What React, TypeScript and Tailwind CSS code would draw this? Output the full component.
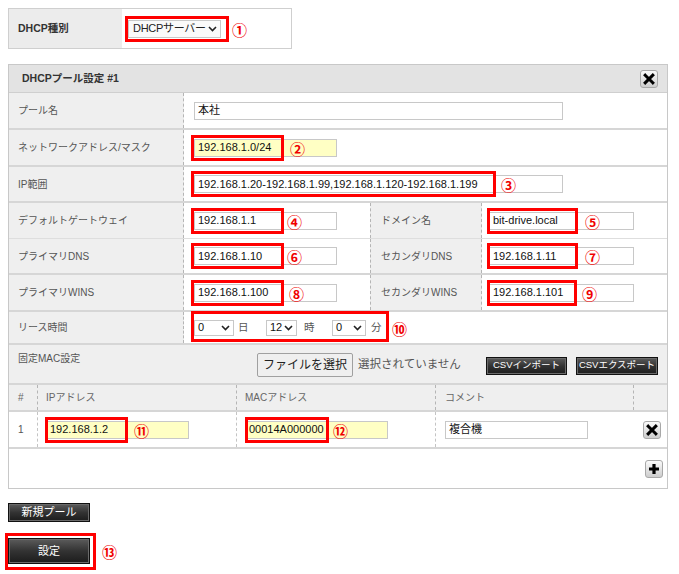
import React from "react";

const XBtn = () => (
  <div className="w-[18px] h-[18px] rounded-[3px] border border-[#a8a8a8] bg-gradient-to-b from-[#fbfbfb] to-[#cdcdcd] flex items-center justify-center">
    <svg width="12" height="12" viewBox="0 0 12 12">
      <path d="M2.2 2.2 L9.8 9.8 M9.8 2.2 L2.2 9.8" stroke="#000" strokeWidth="3" strokeLinecap="square" />
    </svg>
  </div>
);

const PlusBtn = () => (
  <div className="w-[18px] h-[18px] rounded-[3px] border border-[#a8a8a8] bg-gradient-to-b from-[#fbfbfb] to-[#cdcdcd] flex items-center justify-center">
    <svg width="12" height="12" viewBox="0 0 12 12">
      <path d="M6 1 V11 M1 6 H11" stroke="#000" strokeWidth="3.2" />
    </svg>
  </div>
);

const Chevron = () => (
  <svg width="9" height="6" viewBox="0 0 9 6" className="shrink-0">
    <polyline points="1,1 4.5,4.5 8,1" fill="none" stroke="#222" strokeWidth="1.6" />
  </svg>
);

const Circ = ({ c, className }: { c: string; className: string }) => (
  <span
    className={
      "absolute top-1/2 -translate-y-1/2 text-[15px] font-bold leading-none text-[#f00000] font-['Noto_Sans_CJK_JP',sans-serif] " +
      className
    }
  >
    {c}
  </span>
);

const labelCls =
  "w-[175px] shrink-0 bg-[#efefef] border-r border-dashed border-[#b5b5b5] flex items-center pl-[9px] text-[10px] text-[#555]";
const midLabelCls =
  "w-[112px] shrink-0 bg-[#efefef] border-l border-r border-dashed border-[#b5b5b5] flex items-center pl-[10px] text-[10px] text-[#555]";
const inputBase =
  "h-[18px] border border-[#c8c8c8] flex items-center px-[3px] text-[11px] text-[#111] whitespace-nowrap overflow-hidden";
const redCls = "absolute border-[3px] border-[#ff0000] pointer-events-none";
const darkBtn =
  "flex items-center justify-center bg-gradient-to-b from-[#5c5c5c] via-[#333] to-[#1c1c1c] border border-[#111] shadow-[inset_0_0_0_1px_#6a6a6a] text-white";

export default function App() {
  return (
    <div className="w-[679px] h-[574px] bg-white p-2 font-['Liberation_Sans','Noto_Sans_CJK_JP',sans-serif] text-[#333]">
      {/* DHCP type */}
      <div className="flex w-[284px] h-[41px] border border-[#cfcfcf]">
        <div className="w-[113px] bg-[#ececec] flex items-center pl-[9px] font-bold text-[10.5px] text-[#333]">
          DHCP種別
        </div>
        <div className="flex-1 flex items-center pl-[6px]">
          <div className="relative">
            <div className="w-[93px] h-[18px] border border-[#c8c8c8] bg-[#fafafa] flex items-center justify-between pl-[4px] pr-[3px] text-[11px] text-[#222] whitespace-nowrap">
              <span className="tracking-[-0.3px]">DHCPサーバー</span>
              <Chevron />
            </div>
            <div className={redCls + " -left-[3px] -top-[4px] w-[104px] h-[26px]"} />
            <Circ c="①" className="left-[104px]" />
          </div>
        </div>
      </div>

      {/* Pool panel */}
      <div className="mt-[15px] w-[660px] border border-[#c8c8c8]">
        <div className="h-[28px] bg-[#e3e3e3] flex items-center justify-between pl-[13px] pr-[9px] border-b border-[#cfcfcf]">
          <span className="font-bold text-[10.5px] text-[#333]">DHCPプール設定 #1</span>
          <XBtn />
        </div>

        {/* pool name */}
        <div className="flex h-[37px] border-b-2 border-[#d6d6d6]">
          <div className={labelCls}>プール名</div>
          <div className="flex items-center pl-[10px]">
            <div className={inputBase + " w-[369px] bg-white"}>本社</div>
          </div>
        </div>

        {/* network */}
        <div className="flex h-[37px] border-b-2 border-[#d6d6d6]">
          <div className={labelCls}>ネットワークアドレス/マスク</div>
          <div className="flex items-center pl-[10px]">
            <div className="relative">
              <div className={inputBase + " w-[143px] bg-[#ffffc4]"}>192.168.1.0/24</div>
              <div className={redCls + " -left-[3px] -top-[4px] w-[93px] h-[26px]"} />
              <Circ c="②" className="left-[96px]" />
            </div>
          </div>
        </div>

        {/* IP range */}
        <div className="flex h-[36px] border-b-2 border-[#d6d6d6]">
          <div className={labelCls}>IP範囲</div>
          <div className="flex items-center pl-[10px]">
            <div className="relative">
              <div className={inputBase + " w-[369px] bg-white"}>
                192.168.1.20-192.168.1.99,192.168.1.120-192.168.1.199
              </div>
              <div className={redCls + " -left-[3px] -top-[4px] w-[305px] h-[26px]"} />
              <Circ c="③" className="left-[307px]" />
            </div>
          </div>
        </div>

        {/* gateway / domain */}
        <div className="flex h-[36px] border-b border-[#dedede]">
          <div className={labelCls}>デフォルトゲートウェイ</div>
          <div className="w-[186px] shrink-0 flex items-center pl-[10px]">
            <div className="relative">
              <div className={inputBase + " w-[143px] bg-white"}>192.168.1.1</div>
              <div className={redCls + " -left-[3px] -top-[4px] w-[93px] h-[26px]"} />
              <Circ c="④" className="left-[93px]" />
            </div>
          </div>
          <div className={midLabelCls}>ドメイン名</div>
          <div className="flex items-center pl-[7px]">
            <div className="relative">
              <div className={inputBase + " w-[145px] bg-white"}>bit-drive.local</div>
              <div className={redCls + " -left-[2px] -top-[4px] w-[91px] h-[26px]"} />
              <Circ c="⑤" className="left-[96px]" />
            </div>
          </div>
        </div>

        {/* DNS */}
        <div className="flex h-[36px] border-b-2 border-[#d6d6d6]">
          <div className={labelCls}>プライマリDNS</div>
          <div className="w-[186px] shrink-0 flex items-center pl-[10px]">
            <div className="relative">
              <div className={inputBase + " w-[143px] bg-white"}>192.168.1.10</div>
              <div className={redCls + " -left-[3px] -top-[4px] w-[93px] h-[26px]"} />
              <Circ c="⑥" className="left-[93px]" />
            </div>
          </div>
          <div className={midLabelCls}>セカンダリDNS</div>
          <div className="flex items-center pl-[7px]">
            <div className="relative">
              <div className={inputBase + " w-[145px] bg-white"}>192.168.1.11</div>
              <div className={redCls + " -left-[2px] -top-[4px] w-[91px] h-[26px]"} />
              <Circ c="⑦" className="left-[96px]" />
            </div>
          </div>
        </div>

        {/* WINS */}
        <div className="flex h-[37px] border-b-2 border-[#d6d6d6]">
          <div className={labelCls}>プライマリWINS</div>
          <div className="w-[186px] shrink-0 flex items-center pl-[10px]">
            <div className="relative">
              <div className={inputBase + " w-[143px] bg-white"}>192.168.1.100</div>
              <div className={redCls + " -left-[3px] -top-[4px] w-[93px] h-[26px]"} />
              <Circ c="⑧" className="left-[95px]" />
            </div>
          </div>
          <div className={midLabelCls}>セカンダリWINS</div>
          <div className="flex items-center pl-[7px]">
            <div className="relative">
              <div className={inputBase + " w-[145px] bg-white"}>192.168.1.101</div>
              <div className={redCls + " -left-[2px] -top-[4px] w-[90px] h-[26px]"} />
              <Circ c="⑨" className="left-[93px]" />
            </div>
          </div>
        </div>

        {/* lease */}
        <div className="flex h-[33px] border-b-2 border-[#d6d6d6]">
          <div className={labelCls}>リース時間</div>
          <div className="flex items-center pl-[10px]">
            <div className="relative flex items-center text-[10.5px] text-[#555]">
              <div className="w-[40px] h-[16px] border border-[#c8c8c8] bg-white flex items-center justify-between pl-[3px] pr-[3px] text-[11px] text-[#111]">
                <span>0</span>
                <Chevron />
              </div>
              <span className="ml-[4px] w-[28px]">日</span>
              <div className="w-[31px] h-[16px] border border-[#c8c8c8] bg-white flex items-center justify-between pl-[3px] pr-[3px] text-[11px] text-[#111]">
                <span>12</span>
                <Chevron />
              </div>
              <span className="ml-[7px] w-[28px]">時</span>
              <div className="w-[34px] h-[16px] border border-[#c8c8c8] bg-white flex items-center justify-between pl-[3px] pr-[3px] text-[11px] text-[#111]">
                <span>0</span>
                <Chevron />
              </div>
              <span className="ml-[5px]">分</span>
              <div className={redCls + " -left-[3px] -top-[9px] w-[198px] h-[31px]"} />
              <Circ c="⑩" className="left-[198px]" />
            </div>
          </div>
        </div>

        {/* MAC setting */}
        <div className="flex items-center h-[40px] bg-[#efefef] border-b-2 border-[#d6d6d6] pr-[9px]">
          <div className="w-[248px] self-start pl-[9px] pt-[6px] text-[10px] text-[#555]">固定MAC設定</div>
          <div className="w-[96px] h-[24px] border border-[#a0a0a0] rounded-[2px] bg-[#efefef] flex items-center justify-center text-[12px] text-[#222] mt-[2px]">
            ファイルを選択
          </div>
          <span className="ml-[5px] text-[11.5px] text-[#555] mt-[2px]">選択されていません</span>
          <div className={darkBtn + " ml-auto w-[81px] h-[18px] text-[9.5px] mt-[3px]"}>CSVインポート</div>
          <div className={darkBtn + " ml-[9px] w-[82px] h-[18px] text-[9.5px] mt-[3px]"}>CSVエクスポート</div>
        </div>

        {/* table header */}
        <div className="flex h-[27px] bg-[#efefef] border-b-2 border-[#d6d6d6] text-[10px] text-[#666]">
          <div className="w-[29px] border-r border-dashed border-[#b5b5b5] flex items-center pl-[9px]">#</div>
          <div className="w-[199px] border-r border-dashed border-[#b5b5b5] flex items-center pl-[8px]">IPアドレス</div>
          <div className="w-[199px] border-r border-dashed border-[#b5b5b5] flex items-center pl-[8px]">MACアドレス</div>
          <div className="w-[198px] border-r border-dashed border-[#b5b5b5] flex items-center pl-[9px]">コメント</div>
          <div className="flex-1" />
        </div>

        {/* data row */}
        <div className="flex h-[37px] border-b-2 border-[#d6d6d6]">
          <div className="w-[29px] border-r border-dashed border-[#c4c4c4] flex items-center pl-[9px] text-[10px] text-[#555]">1</div>
          <div className="w-[199px] border-r border-dashed border-[#c4c4c4] flex items-center pl-[8px]">
            <div className="relative">
              <div className={inputBase + " w-[143px] bg-[#ffffc4]"}>192.168.1.2</div>
              <div className={redCls + " -left-[1px] -top-[4px] w-[83px] h-[26px]"} />
              <Circ c="⑪" className="left-[88px]" />
            </div>
          </div>
          <div className="w-[199px] border-r border-dashed border-[#c4c4c4] flex items-center pl-[9px]">
            <div className="relative">
              <div className={inputBase + " w-[142px] bg-[#ffffc4] !px-[2px]"}>00014A000000</div>
              <div className={redCls + " -left-[1px] -top-[4px] w-[84px] h-[26px]"} />
              <Circ c="⑫" className="left-[87px]" />
            </div>
          </div>
          <div className="w-[198px] flex items-center pl-[9px]">
            <div className={inputBase + " w-[143px] bg-white"}>複合機</div>
          </div>
          <div className="flex-1 flex items-center pl-[9px]">
            <XBtn />
          </div>
        </div>

        {/* add row */}
        <div className="flex h-[39px] items-center justify-end pr-[4px]">
          <PlusBtn />
        </div>
      </div>

      {/* bottom buttons */}
      <div className={darkBtn + " mt-[14px] w-[82px] h-[19px] text-[11px]"}>新規プール</div>
      <div className="relative mt-[16px] w-[82px]">
        <div className={darkBtn + " w-[82px] h-[26px] text-[11px]"}>設定</div>
        <div className={redCls + " -left-[3px] -top-[5px] w-[91px] h-[37px]"} />
        <Circ c="⑬" className="left-[94px]" />
      </div>
    </div>
  );
}
